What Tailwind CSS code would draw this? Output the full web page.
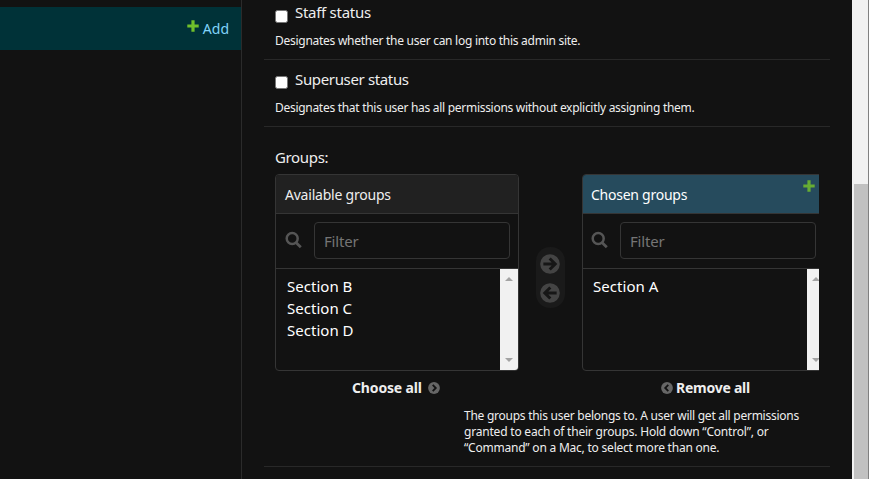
<!DOCTYPE html>
<html lang="en">
<head>
<meta charset="utf-8">
<title>Change user</title>
<script src="https://cdn.jsdelivr.net/npm/@tailwindcss/browser@4"></script>
</head>
<body class="flex h-[479px] w-[869px] overflow-hidden bg-[#121212] font-['Noto_Sans','Open_Sans',sans-serif] text-[#eeeeee]">
  <nav class="w-[242px] shrink-0 border-r border-[#2b2b2b] pt-[7px]">
    <div class="flex h-[43px] items-center justify-end bg-[#003238] pr-3">
      <svg class="mt-[-6px] mr-1 size-3" viewBox="0 0 12 12"><path d="M4.4 .3h3.2v4.1h4.1v3.2H7.6v4.1H4.4V7.6H.3V4.4h4.1z" fill="#70bf2b"/></svg>
      <a class="text-[14px] leading-5 tracking-[0px] text-[#81d4fa]">Add</a>
    </div>
  </nav>
  <main class="w-[610px] shrink-0 pl-[22px]">
    <div class="w-[566px]">
      <div class="h-[60px] border-b border-[#282828] pl-[11px]">
        <label class="flex h-[26px] items-start"><span class="mt-[10px] mr-[7px] size-[13px] rounded-[2.5px] border border-[#767676] bg-white"></span><span class="mt-[1px] text-[15px] leading-[22px] tracking-[-0.28px]">Staff status</span></label>
        <p class="mt-[7px] text-[12px] leading-4 tracking-[-0.27px]"><span>Designates whether the user can log into this admin site.</span></p>
      </div>
      <div class="h-[67px] border-b border-[#282828] pl-[11px]">
        <label class="flex h-[33px] items-start"><span class="mt-[16px] mr-[7px] size-[13px] rounded-[2.5px] border border-[#767676] bg-white"></span><span class="mt-[8px] text-[15px] leading-[22px] tracking-[-0.35px]">Superuser status</span></label>
        <p class="mt-[7px] text-[12px] leading-4 tracking-[-0.29px]"><span>Designates that this user has all permissions without explicitly assigning them.</span></p>
      </div>
      <div class="h-[340px] overflow-hidden border-b border-[#282828] px-[11px] pt-[19px]">
        <h2 class="h-[28px] text-[15px] leading-[22px] tracking-[-0.35px]"><span>Groups:</span></h2>
        <div class="flex w-[544px] overflow-hidden">
          <section class="w-[244px] shrink-0">
            <div class="h-[197px] overflow-hidden rounded-[4px] border border-[#353535]">
              <h3 class="h-[39px] border-b border-[#353535] bg-[#212121] pt-[10px] pl-[9px] text-[14px] leading-5 tracking-[-0.22px]"><span>Available groups</span></h3>
              <div class="flex h-[55px] items-center border-b border-[#353535] pb-[2px] pl-[9px]">
                <svg class="size-[18px]" viewBox="0 0 18 18" fill="none" stroke="#555" stroke-width="2.5"><circle cx="7.2" cy="7.6" r="5.5"/><path d="m11.2 11.8 4.6 4.4" stroke-width="2.8"/></svg>
                <div class="ml-[11px] h-[37px] w-[196px] rounded-[4px] border border-[#353535] pt-[7px] pl-[9px] text-[15px] leading-[22px] tracking-[-0.2px] text-[#757575]"><span>Filter</span></div>
              </div>
              <div class="flex h-[101px] justify-between">
                <ul class="pt-[6px] pl-[11px] text-[15px] leading-[22px] tracking-[0.02px] text-white"><li><span>Section B</span></li><li><span>Section C</span></li><li><span>Section D</span></li></ul>
                <div class="flex w-[18px] flex-col items-center justify-between bg-[#f1f1f1] py-2">
                  <svg class="h-[4px] w-2" viewBox="0 0 8 4"><path d="M0 4 4 0l4 4z" fill="#a3a3a3"/></svg>
                  <svg class="h-[4px] w-2" viewBox="0 0 8 4"><path d="M0 0 4 4 8 0z" fill="#a3a3a3"/></svg>
                </div>
              </div>
            </div>
            <a class="flex h-8 items-center pl-[77px] text-[14px] font-bold tracking-[-0.15px]"><span>Choose all</span><svg class="mt-px ml-[6px] size-3" viewBox="0 0 12 12"><circle cx="6" cy="6" r="5.9" fill="#666"/><path d="M4.7 2.9 7.8 6 4.7 9.1" fill="none" stroke="#121212" stroke-width="1.8"/></svg></a>
          </section>
          <div class="mt-[73px] mr-[17px] ml-[17px] flex h-[61px] w-[29px] shrink-0 flex-col items-start gap-[10px] rounded-[14px] bg-[#1a1a1a] pt-[7px] pl-[4px]">
            <svg class="size-[20px] -mb-px" viewBox="0 0 19 19"><circle cx="9.5" cy="9.5" r="9.3" fill="#444"/><path d="M3.2 9.5h11M9.2 4.2l5.3 5.3-5.3 5.3" fill="none" stroke="#161616" stroke-width="2.8"/></svg>
            <svg class="size-[20px]" viewBox="0 0 19 19"><circle cx="9.5" cy="9.5" r="9.3" fill="#444"/><path d="M15.8 9.5h-11M9.8 4.2 4.5 9.5l5.3 5.3" fill="none" stroke="#161616" stroke-width="2.8"/></svg>
          </div>
          <section class="w-[244px] shrink-0">
            <div class="h-[197px] overflow-hidden rounded-[4px] border border-[#353535]">
              <h3 class="flex h-[39px] border-b border-[#353535] bg-[#264b5d] pt-[10px] pl-[8px] text-[14px] leading-5 tracking-[-0.25px] text-white"><span>Chosen groups</span><svg class="mt-[-5px] ml-auto mr-[10px] size-3" viewBox="0 0 12 12"><path d="M4.4 .3h3.2v4.1h4.1v3.2H7.6v4.1H4.4V7.6H.3V4.4h4.1z" fill="#67ad33"/></svg></h3>
              <div class="flex h-[55px] items-center border-b border-[#353535] pb-[2px] pl-[8px]">
                <svg class="size-[18px]" viewBox="0 0 18 18" fill="none" stroke="#555" stroke-width="2.5"><circle cx="7.2" cy="7.6" r="5.5"/><path d="m11.2 11.8 4.6 4.4" stroke-width="2.8"/></svg>
                <div class="ml-[11px] h-[37px] w-[196px] rounded-[4px] border border-[#353535] pt-[7px] pl-[9px] text-[15px] leading-[22px] tracking-[-0.2px] text-[#757575]"><span>Filter</span></div>
              </div>
              <div class="flex h-[101px] justify-between">
                <ul class="pt-[6px] pl-[10px] text-[15px] leading-[22px] tracking-[0.05px] text-white"><li><span>Section A</span></li></ul>
                <div class="flex w-[18px] flex-col items-center justify-between bg-[#f1f1f1] py-2">
                  <svg class="h-[4px] w-2" viewBox="0 0 8 4"><path d="M0 4 4 0l4 4z" fill="#a3a3a3"/></svg>
                  <svg class="h-[4px] w-2" viewBox="0 0 8 4"><path d="M0 0 4 4 8 0z" fill="#a3a3a3"/></svg>
                </div>
              </div>
            </div>
            <a class="flex h-8 items-center pl-[79px] text-[14px] font-bold tracking-[-0.25px]"><svg class="mt-px mr-[3px] size-3" viewBox="0 0 12 12"><circle cx="6" cy="6" r="5.9" fill="#666"/><path d="M7.3 2.9 4.2 6l3.1 3.1" fill="none" stroke="#121212" stroke-width="1.8"/></svg><span>Remove all</span></a>
          </section>
        </div>
        <p class="mt-[5px] ml-[189px] text-[12px] leading-4 tracking-[-0.26px] whitespace-nowrap"><span>The groups this user belongs to. A user will get all permissions</span><br><span class="tracking-[-0.2px]">granted to each of their groups. Hold down “Control”, or</span><br><span class="tracking-[-0.22px]">“Command” on a Mac, to select more than one.</span></p>
      </div>
    </div>
  </main>
  <div class="w-[17px] shrink-0 border-r border-[#808080] bg-[#f1f1f1] pt-[184px] pl-[2px]"><div class="h-[295px] bg-[#c1c1c1]"></div></div>
</body>
</html>
